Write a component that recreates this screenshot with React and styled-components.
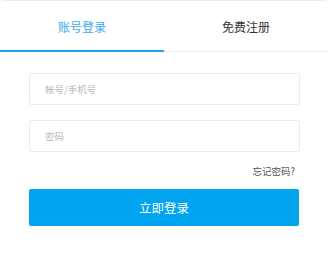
import React, { useState } from "react";
import styled, { createGlobalStyle } from "styled-components";

const GlobalStyle = createGlobalStyle`
  html, body {
    margin: 0;
    padding: 0;
    background: #ffffff;
  }
  body {
    font-family: "Noto Sans CJK SC", "Noto Sans", sans-serif;
  }
`;

const Card = styled.div`
  width: 328px;
  height: 262px;
  box-sizing: border-box;
  background: #fff;
  border-top: 1px solid #ececec;
  border-radius: 4px 4px 0 0;
  overflow: hidden;
`;

const Tabs = styled.div`
  display: flex;
  height: 50px;
  border-bottom: 1px solid #eeeeee;
`;

const Tab = styled.button`
  flex: 1;
  border: 0;
  background: none;
  padding: 2px 0 0;
  margin-bottom: -1px;
  font-family: inherit;
  font-size: 12px;
  color: ${(p) => (p.$active ? "#3aaaf0" : "#333333")};
  border-bottom: 2px solid ${(p) => (p.$active ? "#1ea4ea" : "transparent")};
  cursor: pointer;
`;

const Form = styled.form`
  display: flex;
  flex-direction: column;
  padding: 21px 28px 0 29px;
`;

const Input = styled.input`
  height: 32px;
  box-sizing: border-box;
  border: 1px solid #ececec;
  border-radius: 2px;
  padding: 0 15px;
  font-family: inherit;
  font-size: 9.5px;
  color: #333;
  outline: none;
  margin-bottom: ${(p) => p.$gap || 0}px;

  &::placeholder {
    color: #b9b9b9;
  }
`;

const Forgot = styled.a`
  align-self: flex-end;
  margin: 12px 5px 0 0;
  font-size: 9.5px;
  line-height: 14px;
  color: #555555;
  text-decoration: none;
`;

const Submit = styled.button`
  margin-top: 11px;
  height: 37px;
  width: 270px;
  border: 0;
  border-radius: 2px;
  background: #00a4ef;
  color: #ffffff;
  font-family: inherit;
  font-size: 12.5px;
  cursor: pointer;
`;

export default function App() {
  const [tab, setTab] = useState(0);

  return (
    <>
      <GlobalStyle />
      <Card>
        <Tabs>
          <Tab $active={tab === 0} onClick={() => setTab(0)}>
            账号登录
          </Tab>
          <Tab $active={tab === 1} onClick={() => setTab(1)}>
            免费注册
          </Tab>
        </Tabs>
        <Form onSubmit={(e) => e.preventDefault()}>
          <Input placeholder="帐号/手机号" $gap={15} />
          <Input type="password" placeholder="密码" />
          <Forgot href="#">忘记密码?</Forgot>
          <Submit type="submit">立即登录</Submit>
        </Form>
      </Card>
    </>
  );
}
